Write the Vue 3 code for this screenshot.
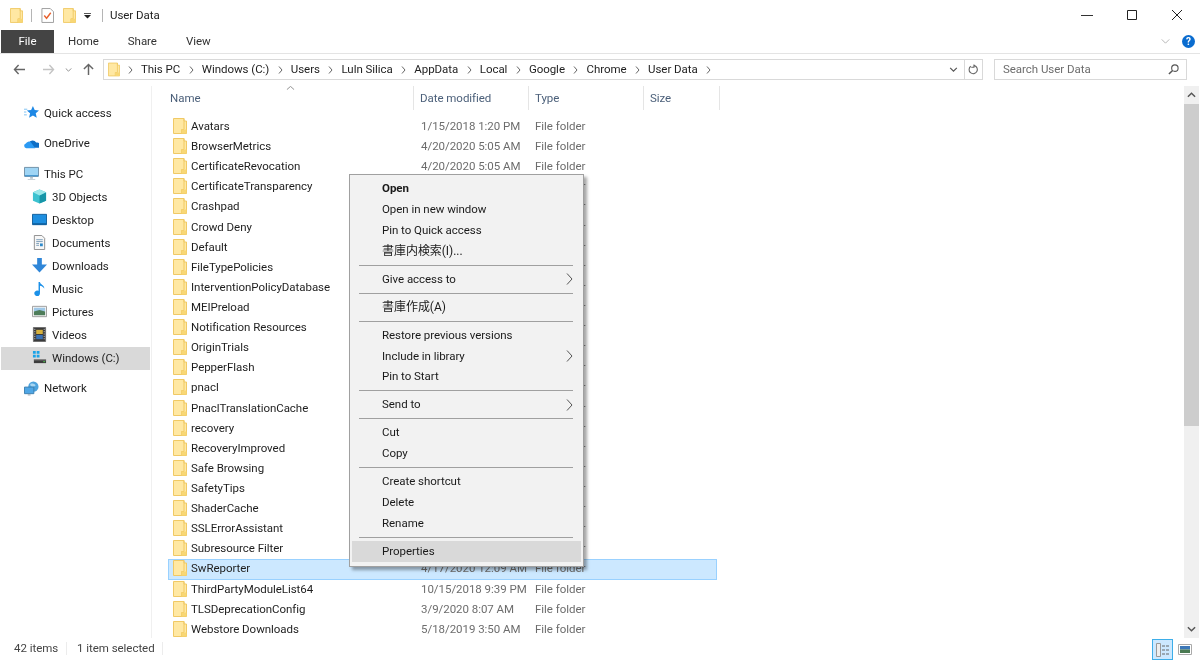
<template>
  <div class="explorer">
    <svg width="0" height="0" class="defs">
      <defs>
        <symbol id="folder" viewBox="0 0 14 16">
          <path d="M.5.5h10.5v2.500h2.500v12.500H.5z" fill="#ffe8a3" stroke="#f0c965" />
          <path d="M11 .5v11H8.500v4" fill="none" stroke="#f0c965" />
          <path d="M11 11.500h2.500v4H8.500v-4z" fill="#f8d775" />
        </symbol>
      </defs>
    </svg>

    <header class="titlebar">
      <div class="quick">
        <svg class="folder-sm"><use href="#folder" /></svg>
        <i class="bar"></i>
        <svg class="check" viewBox="0 0 14 16">
          <path d="M1 .5h9l3.500 3.500v11.500H1z" fill="#fff" stroke="#9a9a9a" />
          <path d="M3.500 8l2.500 3 4.500-6" fill="none" stroke="#e8622f" stroke-width="1.500" />
        </svg>
        <svg class="folder-sm"><use href="#folder" /></svg>
        <svg class="qat-arrow" viewBox="0 0 8 8">
          <path d="M0 1h8v1H0zM0 3.500h8L4 7.500z" fill="#222" />
        </svg>
        <i class="bar"></i>
        <span class="title">User Data</span>
      </div>
      <div class="winctl">
        <svg viewBox="0 0 12 12"><path d="M0 6.500h12" stroke="#333" /></svg>
        <svg viewBox="0 0 12 12"><path d="M1.500 1.500h9v9h-9z" fill="none" stroke="#222" /></svg>
        <svg viewBox="0 0 12 12"><path d="M1 1l10 10M11 1L1 11" stroke="#222" /></svg>
      </div>
    </header>

    <nav class="ribbon">
      <span class="tab tab--file">File</span>
      <span class="tab">Home</span>
      <span class="tab">Share</span>
      <span class="tab">View</span>
      <svg class="collapse" viewBox="0 0 10 6"><path d="M.5.500L5 5 9.500.500" fill="none" stroke="#a8a8a8" /></svg>
      <span class="help">?</span>
    </nav>

    <div class="addressrow">
      <div class="navbtns">
        <svg viewBox="0 0 14 12" class="nav-arrow"><path d="M6 1L1.500 6 6 11M1.500 6H13" fill="none" stroke="#666" stroke-width="1.500" /></svg>
        <svg viewBox="0 0 14 12" class="nav-arrow nav-fwd"><path d="M8 1l4.500 5L8 11M12.500 6H1" fill="none" stroke="#c4c4c4" stroke-width="1.500" /></svg>
        <svg viewBox="0 0 8 5" class="nav-down"><path d="M.5.500L4 4 7.500.500" fill="none" stroke="#777" /></svg>
        <svg viewBox="0 0 12 14" class="nav-up"><path d="M1 6.500L6 1.500l5 5M6 1.500V13" fill="none" stroke="#666" stroke-width="1.600" /></svg>
      </div>
      <div class="addressbox">
        <svg class="folder-addr"><use href="#folder" /></svg>
        <div class="crumbs">
          <span v-for="c in crumbs" :key="c" class="crumb">
            <svg viewBox="0 0 5 8" class="crumb-sep"><path d="M1 .5L4 4 1 7.500" fill="none" stroke="#666" /></svg>
            <span class="crumb-text">{{ c }}</span>
          </span>
          <svg viewBox="0 0 5 8" class="crumb-sep"><path d="M1 .5L4 4 1 7.500" fill="none" stroke="#666" /></svg>
        </div>
        <svg viewBox="0 0 10 6" class="addr-down"><path d="M1 1l4 4 4-4" fill="none" stroke="#555" stroke-width="1.400" /></svg>
        <div class="refresh">
          <svg viewBox="0 0 12 12"><path d="M3 2.500a4.500 4.500 0 1 0 4-.7M6.500 .5v3h-3" fill="none" stroke="#666" stroke-width="1.200" /></svg>
        </div>
      </div>
      <div class="searchbox">
        <span class="crumb-text">Search User Data</span>
        <svg viewBox="0 0 12 12"><circle cx="7.500" cy="4.500" r="3.500" fill="none" stroke="#555" stroke-width="1.200" /><path d="M5 7l-4 4" stroke="#555" stroke-width="1.600" /></svg>
      </div>
    </div>

    <div class="body">
      <aside class="sidebar">
        <div v-for="n in nav" :key="n.label" :class="['navitem', { 'navitem--sub': n.sub, 'navitem--group': n.group, 'navitem--active': n.active }]">
          <svg viewBox="0 0 16 16" class="navicon" v-html="n.icon"></svg>
          <span>{{ n.label }}</span>
        </div>
      </aside>

      <main class="files">
        <div class="colhead">
          <svg viewBox="0 0 10 5" class="sort"><path d="M.5 4.500L5 .5l4.500 4" fill="none" stroke="#777" /></svg>
          <span class="col col--name">Name</span>
          <span class="col col--date">Date modified</span>
          <span class="col col--type">Type</span>
          <span class="col col--size">Size</span>
        </div>
        <div class="rows">
          <div v-for="f in files" :key="f.name" :class="['row', { 'row--sel': f.name === 'SwReporter' }]">
            <svg class="folder-row"><use href="#folder" /></svg>
            <span class="fname">{{ f.name }}</span>
            <span class="fdate">{{ f.date }}</span>
            <span class="ftype">File folder</span>
          </div>
        </div>
      </main>

      <div class="scrollbar">
        <svg viewBox="0 0 10 6" class="sb-arrow"><path d="M1 5l4-4 4 4" fill="none" stroke="#555" stroke-width="1.600" /></svg>
        <div class="thumb"></div>
        <svg viewBox="0 0 10 6" class="sb-arrow"><path d="M1 1l4 4 4-4" fill="none" stroke="#555" stroke-width="1.600" /></svg>
      </div>

      <div class="menu">
        <template v-for="(m, i) in menu" :key="i">
          <div v-if="m === '-'" class="menu-sep"></div>
          <div v-else :class="['menu-item', { 'menu-item--bold': m.bold, 'menu-item--hot': m.hot, 'menu-item--cjk': m.cjk }]">
            <span>{{ m.label }}</span>
            <svg v-if="m.sub" viewBox="0 0 7 12" class="menu-arrow"><path d="M1 .5L6 6l-5 5.500" fill="none" stroke="#555" /></svg>
          </div>
        </template>
      </div>
    </div>

    <footer class="status">
      <span class="stat stat--count">42 items</span>
      <span class="stat stat--sel">1 item selected</span>
      <div class="views">
        <div class="view view--on">
          <svg viewBox="0 0 16 16">
            <path d="M1.500 1.500h4v13h-4z" fill="#eee" stroke="#999" />
            <path d="M7 4h3M11 4h3M7 8h3M11 8h3M7 12h3M11 12h3" stroke="#666" />
          </svg>
        </div>
        <div class="view">
          <svg viewBox="0 0 14 11">
            <path d="M.5.500h13v10H.5z" fill="#fff" stroke="#aaa" />
            <path d="M2 2h10v3.500H2z" fill="#3d78b8" />
            <path d="M2 5.500h10V9H2z" fill="#4a7a52" />
          </svg>
        </div>
      </div>
    </footer>
  </div>
</template>

<script setup>
const crumbs = ["This PC", "Windows (C:)", "Users", "Luln Silica", "AppData", "Local", "Google", "Chrome", "User Data"];

const icons = {
  quick: '<path d="M9.500 1l1.900 4.400 4.600.5-3.500 3 1.100 4.800-4.100-2.500-4.100 2.500 1.100-4.800-3.500-3 4.600-.5z" fill="#1e88e5"/><path d="M0 4.500h3.500M0 7.500h2.500M0 10.500h3" stroke="#7cc0f2"/>',
  cloud: '<path d="M5 7.500A4.600 4.600 0 0 1 13 7a3.200 3.200 0 0 1 3 5.500H8z" fill="#0f6fc6"/><path d="M2.500 13A2.500 2.500 0 0 1 2 8.100a3.500 3.500 0 0 1 5.500-1.300L12 13z" fill="#2b9af3"/>',
  pc: '<path d="M.5 1.500h15v9.500H.5z" fill="#9fd5f5" stroke="#6e8ea5"/><path d="M1 10h14v1H1z" fill="#1e7fc4"/><path d="M6.500 11.500h3v2h-3zM4 14h8v1H4z" fill="#b8c4cc"/>',
  cube: '<path d="M8 .5l7 3v9l-7 3-7-3v-9z" fill="#3cc2d0"/><path d="M8 7v8.500l7-3v-9z" fill="#1695a8"/><path d="M1 3.500L8 7l7-3.500-7-3z" fill="#9ce8ea"/>',
  desktop: '<path d="M.5 2.500h15v11H.5z" fill="#1e8fe0" stroke="#0e5d9b"/><path d="M1 12h14v1.500H1z" fill="#0e5d9b"/>',
  doc: '<path d="M2.500.5h8l3 3v12h-11z" fill="#f7f7f7" stroke="#8c8c8c"/><path d="M4.500 5h7M4.500 7h7M4.500 9h3M4.500 11h3" stroke="#7a9cb8"/><path d="M8.500 9h3v3h-3z" fill="#2f8acb"/>',
  down: '<path d="M5.500 0h5v7H16L8 15.500 0 7h5.500z" fill="#2f86d8"/>',
  music: '<path d="M7 1h1.500c.5 3 5 3.500 4.500 7-.8-1.700-2.600-2.700-4.500-3v8a3 3 0 1 1-1.500-2.500z" fill="#1b90e8"/>',
  pic: '<path d="M.5 2.500h15v11H.5z" fill="#f4f4f4" stroke="#9a9a9a"/><path d="M2 4h12v4H2z" fill="#9fc8e8"/><path d="M2 8l6-1.500L14 8v4H2z" fill="#4e7d5a"/>',
  video: '<path d="M1.500.5h13v15h-13z" fill="#3b3b3b" stroke="#6e6e6e"/><path d="M4.500 3h7v4.500h-7z" fill="#d7b23d"/><path d="M4.500 8.500h7V13h-7z" fill="#3a72b5"/><path d="M2.500 2.500h1M2.500 5h1M2.500 7.500h1M2.500 10h1M2.500 12.500h1M12.500 2.500h1M12.500 5h1M12.500 7.500h1M12.500 10h1M12.500 12.500h1" stroke="#ddd"/>',
  drive: '<path d="M1 1h3v3H1zM5 1h3v3H5zM1 5h3v3H1zM5 5h3v3H5z" fill="#1aa3e8"/><path d="M2 10h13v4H2z" fill="#3c3c3c"/><path d="M2 10h13v1H2z" fill="#8e8e8e"/><path d="M12 12h2v1h-2z" fill="#4ed04e"/>',
  net: '<circle cx="10" cy="6" r="5.500" fill="#4da3dd"/><path d="M7 3c2-1 4 0 5 1s-1 2-3 2-3-2-2-3z" fill="#a7d6f2"/><path d="M.5 6.500h10v7H.5z" fill="#4fa6e5" stroke="#3a7eaf"/><path d="M4 14h3v1.500H4z" fill="#aab6bf"/>'
};

const nav = [
  { label: "Quick access", icon: icons.quick },
  { label: "OneDrive", icon: icons.cloud, group: true },
  { label: "This PC", icon: icons.pc, group: true },
  { label: "3D Objects", icon: icons.cube, sub: true },
  { label: "Desktop", icon: icons.desktop, sub: true },
  { label: "Documents", icon: icons.doc, sub: true },
  { label: "Downloads", icon: icons.down, sub: true },
  { label: "Music", icon: icons.music, sub: true },
  { label: "Pictures", icon: icons.pic, sub: true },
  { label: "Videos", icon: icons.video, sub: true },
  { label: "Windows (C:)", icon: icons.drive, sub: true, active: true },
  { label: "Network", icon: icons.net, group: true }
];

const files = [
  { name: "Avatars", date: "1/15/2018 1:20 PM" },
  { name: "BrowserMetrics", date: "4/20/2020 5:05 AM" },
  { name: "CertificateRevocation", date: "4/20/2020 5:05 AM" },
  { name: "CertificateTransparency", date: "" },
  { name: "Crashpad", date: "" },
  { name: "Crowd Deny", date: "" },
  { name: "Default", date: "" },
  { name: "FileTypePolicies", date: "" },
  { name: "InterventionPolicyDatabase", date: "" },
  { name: "MEIPreload", date: "" },
  { name: "Notification Resources", date: "" },
  { name: "OriginTrials", date: "" },
  { name: "PepperFlash", date: "" },
  { name: "pnacl", date: "" },
  { name: "PnaclTranslationCache", date: "" },
  { name: "recovery", date: "" },
  { name: "RecoveryImproved", date: "" },
  { name: "Safe Browsing", date: "" },
  { name: "SafetyTips", date: "" },
  { name: "ShaderCache", date: "" },
  { name: "SSLErrorAssistant", date: "" },
  { name: "Subresource Filter", date: "" },
  { name: "SwReporter", date: "4/17/2020 12:09 AM" },
  { name: "ThirdPartyModuleList64", date: "10/15/2018 9:39 PM" },
  { name: "TLSDeprecationConfig", date: "3/9/2020 8:07 AM" },
  { name: "Webstore Downloads", date: "5/18/2019 3:50 AM" }
];

const menu = [
  { label: "Open", bold: true },
  { label: "Open in new window" },
  { label: "Pin to Quick access" },
  { label: "書庫内検索(I)...", cjk: true },
  "-",
  { label: "Give access to", sub: true },
  "-",
  { label: "書庫作成(A)", cjk: true },
  "-",
  { label: "Restore previous versions" },
  { label: "Include in library", sub: true },
  { label: "Pin to Start" },
  "-",
  { label: "Send to", sub: true },
  "-",
  { label: "Cut" },
  { label: "Copy" },
  "-",
  { label: "Create shortcut" },
  { label: "Delete" },
  { label: "Rename" },
  "-",
  { label: "Properties", hot: true }
];
</script>

<style>
html, body {
  margin: 0;
  background: #fff;
}
</style>

<style scoped>
.explorer {
  width: 1200px;
  height: 661px;
  display: flex;
  flex-direction: column;
  overflow: hidden;
  background: #fff;
  color: #1e1e1e;
  font: 11.500px Roboto, "Noto Sans CJK JP", sans-serif;
  letter-spacing: -0.04px;
  filter: blur(0.3px);
}
.defs {
  position: absolute;
}

.titlebar {
  height: 30px;
  flex: none;
  display: flex;
  align-items: center;
  justify-content: space-between;
}
.quick {
  display: flex;
  align-items: center;
  padding-left: 10px;
}
.folder-sm {
  width: 13px;
  height: 15px;
}
.bar {
  width: 1px;
  height: 13px;
  background: #b5b5b5;
  margin: 0 9px 0 8px;
}
.check {
  width: 13px;
  height: 15px;
  margin-right: 9px;
}
.qat-arrow {
  width: 7px;
  height: 7px;
  margin-left: 8px;
  margin-right: 3px;
}
.title {
  margin-left: -2px;
}
.winctl {
  display: flex;
  gap: 33px;
  padding-right: 17px;
}
.winctl svg {
  width: 12px;
  height: 12px;
}

.ribbon {
  height: 23px;
  flex: none;
  display: flex;
  align-items: center;
  border-bottom: 1px solid #e4e4e4;
  padding-left: 1px;
}
.tab {
  padding: 0 14px;
  margin-right: 1px;
  line-height: 22px;
  height: 23px;
  color: #333;
}
.tab--file {
  width: 53px;
  box-sizing: border-box;
  text-align: center;
  background: #444;
  color: #fff;
  margin-right: 0;
}
.collapse {
  width: 9px;
  height: 5px;
  margin-left: auto;
  margin-right: 12px;
}
.help {
  width: 13px;
  height: 13px;
  margin-right: 5px;
  border-radius: 50%;
  background: #0a6ccf;
  color: #fff;
  font-size: 10px;
  font-weight: 700;
  line-height: 13px;
  text-align: center;
}

.addressrow {
  height: 32px;
  box-sizing: border-box;
  padding-bottom: 1px;
  flex: none;
  display: flex;
  align-items: center;
}
.navbtns {
  width: 103px;
  flex: none;
  display: flex;
  align-items: center;
  padding-left: 13px;
  box-sizing: border-box;
}
.nav-arrow {
  width: 13px;
  height: 11px;
}
.nav-fwd {
  margin-left: 16px;
}
.nav-down {
  width: 7px;
  height: 4px;
  margin-left: 10px;
}
.nav-up {
  width: 11px;
  height: 13px;
  margin-left: 11px;
}
.addressbox {
  width: 880px;
  height: 21px;
  box-sizing: border-box;
  border: 1px solid #d9d9d9;
  display: flex;
  align-items: center;
  padding-left: 4px;
}
.folder-addr {
  width: 12px;
  height: 15px;
  margin-right: 8px;
}
.crumbs {
  display: flex;
  align-items: center;
  gap: 8.500px;
  flex: 1;
  white-space: nowrap;
}
.crumb {
  display: flex;
  align-items: center;
  gap: 8px;
}
.crumb-text {
  margin-top: -2px;
}
.crumb-sep {
  width: 5px;
  height: 8px;
}
.addr-down {
  width: 9px;
  height: 5px;
  margin-right: 3px;
}
.refresh {
  width: 17px;
  height: 100%;
  border-left: 1px solid #d9d9d9;
  display: flex;
  align-items: center;
  justify-content: center;
  margin-left: 3px;
}
.refresh svg {
  width: 11px;
  height: 11px;
}
.searchbox {
  width: 193px;
  height: 21px;
  box-sizing: border-box;
  margin-left: 11px;
  border: 1px solid #d9d9d9;
  display: flex;
  align-items: center;
  justify-content: space-between;
  padding: 0 7px 0 8px;
  color: #6d6d6d;
}
.searchbox svg {
  width: 11px;
  height: 11px;
}

.body {
  flex: 1;
  min-height: 0;
  display: flex;
  position: relative;
}
.sidebar {
  width: 152px;
  flex: none;
  box-sizing: border-box;
  padding: 16px 0 0 1px;
  border-right: 1px solid #f0f0f0;
}
.navitem {
  width: 149px;
  height: 23px;
  display: flex;
  align-items: center;
  gap: 5px;
  padding: 0 0 2px 23px;
  box-sizing: border-box;
}
.navitem--group {
  margin-top: 7.500px;
}
.navitem--sub {
  padding-left: 31px;
}
.navitem--active {
  background: #d9d9d9;
}
.navicon {
  width: 15px;
  height: 15px;
  flex: none;
}

.files {
  flex: 1;
  min-width: 0;
  padding-left: 16px;
}
.colhead {
  position: relative;
  height: 24px;
  display: flex;
  color: #4c607a;
}
.sort {
  position: absolute;
  left: 118px;
  top: 0;
  width: 9px;
  height: 4px;
}
.col {
  box-sizing: border-box;
  line-height: 24px;
  padding-left: 6px;
  border-right: 1px solid #e5e5e5;
}
.col--name {
  width: 246px;
  padding-left: 2px;
}
.col--date,
.col--type {
  width: 115px;
}
.col--size {
  width: 76px;
}
.rows {
  padding-top: 7px;
}
.row {
  width: 549px;
  height: 20.120px;
  box-sizing: border-box;
  display: flex;
  align-items: center;
  border: 1px solid transparent;
  padding-bottom: 2px;
}
.row--sel {
  background: #cce8ff;
  border-color: #99d1ff;
}
.folder-row {
  width: 14px;
  height: 16px;
  margin-left: 4px;
  flex: none;
}
.fname {
  width: 230px;
  margin-left: 4px;
  flex: none;
}
.fdate {
  width: 114px;
  flex: none;
  color: #6d6d6d;
}
.ftype {
  color: #6d6d6d;
}

.scrollbar {
  position: absolute;
  right: 1px;
  top: 0;
  bottom: 0;
  width: 15px;
  background: #f0f0f0;
  display: flex;
  flex-direction: column;
  align-items: center;
}
.sb-arrow {
  width: 9px;
  height: 6px;
  margin: 6px 0;
  flex: none;
}
.thumb {
  width: 100%;
  height: 322px;
  margin-bottom: auto;
  background: #cdcdcd;
}

.menu {
  position: absolute;
  left: 349px;
  top: 88px;
  width: 235px;
  height: 393px;
  box-sizing: border-box;
  padding: 3px 2px;
  background: #f2f2f2;
  border: 1px solid #a0a0a0;
  box-shadow: 3px 3px 3px rgba(0, 0, 0, 0.35);
  color: #1a1a1a;
}
.menu-item {
  height: 20.950px;
  line-height: 23px;
  padding-left: 30px;
  display: flex;
  align-items: center;
  justify-content: space-between;
}
.menu-item--bold {
  font-weight: 700;
}
.menu-item--hot {
  background: #d9d9d9;
}
.menu-item--cjk {
  font-size: 12px;
}
.menu-sep {
  height: 1px;
  margin: 3px 8px 3px 7px;
  background: #a0a0a0;
}
.menu-arrow {
  width: 7px;
  height: 12px;
  margin-right: 8px;
}

.status {
  height: 23px;
  flex: none;
  display: flex;
  align-items: center;
  color: #444;
}
.stat {
  box-sizing: border-box;
  line-height: 13px;
  margin-top: -2px;
}
.stat--count {
  width: 67px;
  padding-left: 14px;
  border-right: 1px solid #ececec;
}
.stat--sel {
  width: 96px;
  padding-left: 10px;
  border-right: 1px solid #ececec;
}
.views {
  margin-left: auto;
  display: flex;
  align-items: center;
  gap: 4px;
  padding-right: 8px;
}
.view {
  width: 15px;
  height: 13px;
  display: flex;
  align-items: center;
  justify-content: center;
}
.view svg {
  width: 14px;
  height: 11px;
}
.view--on {
  width: 21px;
  height: 21px;
  box-sizing: border-box;
  background: #cce8ff;
  border: 1px solid #3daee9;
}
.view--on svg {
  width: 16px;
  height: 16px;
}
</style>
